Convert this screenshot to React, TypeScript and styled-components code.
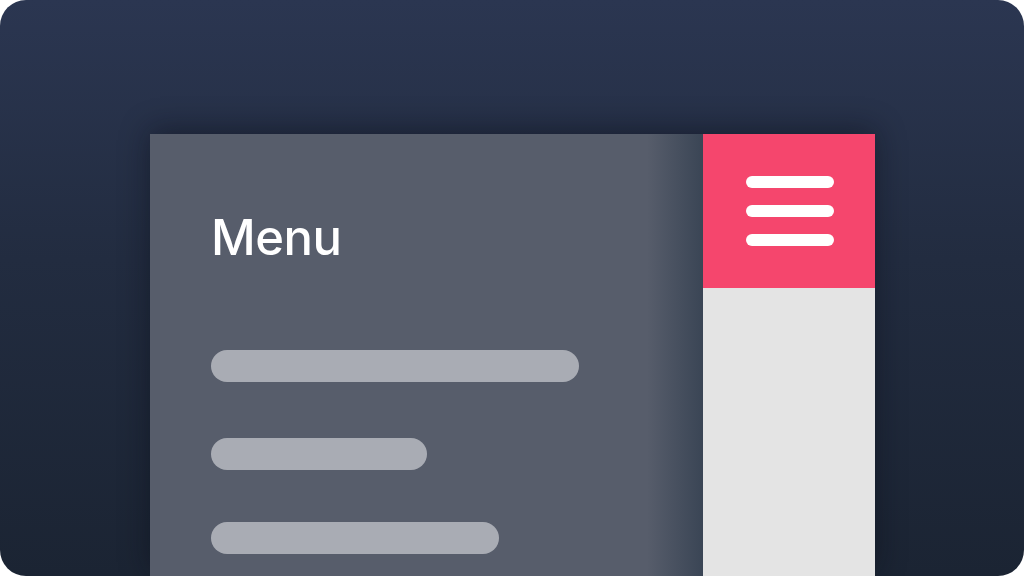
import styled, { createGlobalStyle } from 'styled-components';

const GlobalStyle = createGlobalStyle`
    html, body {
        margin: 0;
        padding: 0;
        background: #ffffff;
    }
    body {
        font-family: Inter, "Noto Sans", sans-serif;
    }
`;

const Frame = styled.div`
    width: 1024px;
    height: 576px;
    box-sizing: border-box;
    border-radius: 26px;
    overflow: hidden;
    background: linear-gradient(180deg, #2b3651 0%, #222c40 45%, #1b2433 100%);
    padding: 134px 0 0 150px;
`;

const Window = styled.div`
    display: flex;
    width: 725px;
    height: 442px;
    box-shadow: 0 -4px 28px rgba(8, 12, 20, 0.45);
`;

const MenuPanel = styled.div`
    width: 553px;
    box-sizing: border-box;
    padding: 78px 0 0 62px;
    background: linear-gradient(90deg, #575d6b 0, #575d6b calc(100% - 56px), #3a4555 100%);
    display: flex;
    flex-direction: column;
    align-items: flex-start;
`;

const Title = styled.h1`
    margin: 0 0 87px -1px;
    color: #ffffff;
    font-family: Inter, "Noto Sans", sans-serif;
    font-weight: 500;
    font-size: 49px;
    line-height: 51px;
    letter-spacing: -0.5px;
`;

const Line = styled.div<{ $w: number; $gap: number }>`
    width: ${props => props.$w}px;
    height: 32px;
    margin-left: -1px;
    border-radius: 16px;
    background: #a9acb4;
    margin-bottom: ${props => props.$gap}px;
    flex-shrink: 0;
`;

const Sidebar = styled.div`
    width: 172px;
    display: flex;
    flex-direction: column;
    background: #e4e4e4;
`;

const ToggleBox = styled.div`
    height: 154px;
    background: #f5466d;
    display: flex;
    flex-direction: column;
    align-items: center;
    justify-content: center;
    gap: 17px;
    padding-left: 2px;
`;

const Stroke = styled.span`
    display: block;
    width: 88px;
    height: 12px;
    border-radius: 6px;
    background: #ffffff;
`;

function App() {
    return (
        <>
            <GlobalStyle />
            <Frame>
                <Window>
                    <MenuPanel>
                        <Title>Menu</Title>
                        <Line $w={368} $gap={56} />
                        <Line $w={216} $gap={52} />
                        <Line $w={288} $gap={0} />
                    </MenuPanel>
                    <Sidebar>
                        <ToggleBox>
                            <Stroke />
                            <Stroke />
                            <Stroke />
                        </ToggleBox>
                    </Sidebar>
                </Window>
            </Frame>
        </>
    );
}

export default App;
